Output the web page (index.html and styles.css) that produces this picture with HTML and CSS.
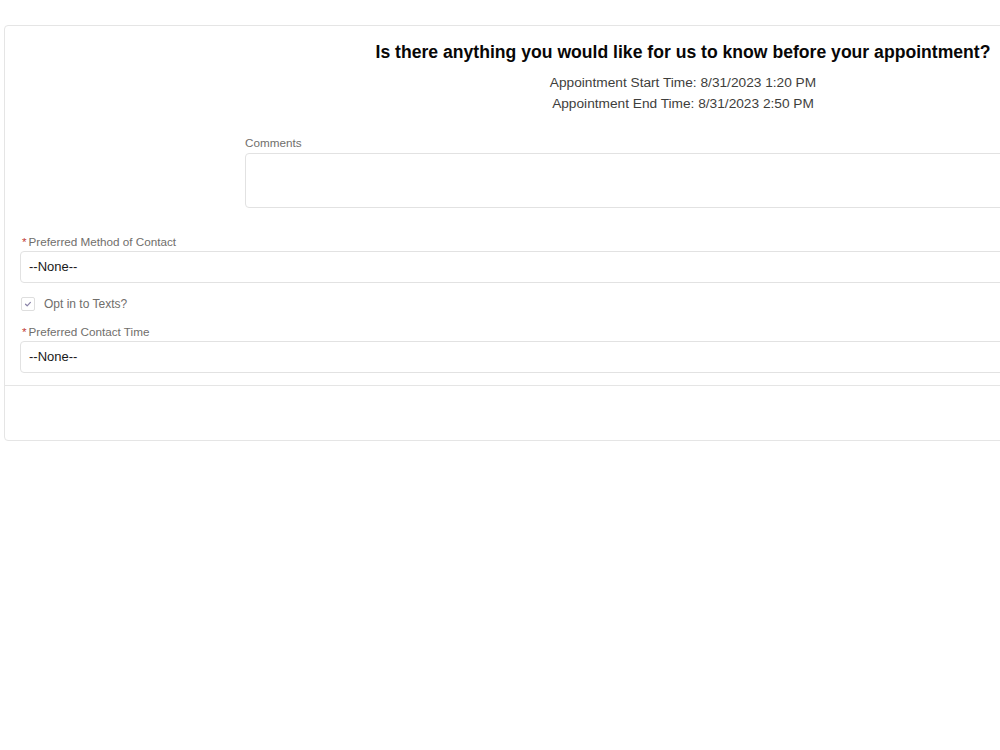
FILE: index.html
```html
<!DOCTYPE html>
<html lang="en">

<head>
    <meta charset="UTF-8">
    <meta name="viewport" content="width=device-width, initial-scale=1.0">
    <title>Appointment Details</title>
    <link rel="stylesheet" href="styles.css">
</head>

<body>
    <div class="page">
        <div class="card">
            <div class="card-body">
                <h2 class="title">Is there anything you would like for us to know before your appointment?</h2>
                <div class="times">
                    <p>Appointment Start Time: 8/31/2023 1:20 PM</p>
                    <p>Appointment End Time: 8/31/2023 2:50 PM</p>
                </div>

                <div class="comments">
                    <label for="comments" class="field-label">Comments</label>
                    <textarea id="comments" name="comments"></textarea>
                </div>

                <div class="field">
                    <label for="method" class="field-label"><abbr class="required">*</abbr>Preferred Method of Contact</label>
                    <div class="select" id="method">--None--</div>
                </div>

                <div class="check-row">
                    <span class="checkbox">
                        <svg width="10" height="10" viewBox="0 0 10 10">
                            <path d="M2.5 5.2 L4.2 6.8 L7.4 3.4" fill="none" stroke="#8a83a8" stroke-width="1.2" stroke-linecap="round" stroke-linejoin="round"/>
                        </svg>
                    </span>
                    <span class="check-label">Opt in to Texts?</span>
                </div>

                <div class="field">
                    <label for="time" class="field-label"><abbr class="required">*</abbr>Preferred Contact Time</label>
                    <div class="select" id="time">--None--</div>
                </div>
            </div>
            <div class="card-footer"></div>
        </div>
    </div>
</body>

</html>
```

FILE: styles.css
```css
body {
    font-family: Arial, "Liberation Sans", sans-serif;
    background-color: #fff;
    margin: 0;
    padding: 0;
}

.page {
    width: 1000px;
    height: 750px;
    overflow: hidden;
    padding-top: 25px;
    box-sizing: border-box;
}

.card {
    width: 1356px;
    margin-left: 4px;
    border: 1px solid #e5e5e5;
    border-radius: 4px;
    background-color: #fff;
}

.card-body {
    padding: 15px 15px 12px 15px;
}

.title {
    margin: 0;
    font-size: 17.6px;
    line-height: 22px;
    font-weight: bold;
    color: #080707;
    text-align: center;
}

.times {
    margin-top: 9px;
    text-align: center;
    color: #3e3e3c;
    font-size: 13.7px;
    line-height: 21px;
}

.times p {
    margin: 0;
}

.comments {
    margin-top: 21px;
    padding-left: 225px;
}

.field-label {
    display: block;
    font-size: 11.7px;
    line-height: 15px;
    color: #706e6b;
    margin-bottom: 2px;
}

.comments .field-label {
    margin-bottom: 3px;
}

textarea {
    display: block;
    width: 100%;
    height: 55px;
    box-sizing: border-box;
    border: 1px solid #e2e2e2;
    border-radius: 4px;
    resize: none;
    font-family: inherit;
}

.field {
    margin-top: 26px;
}

.required {
    color: #c23934;
    text-decoration: none;
    margin: 0 2px 0 2px;
}

.select {
    height: 32px;
    box-sizing: border-box;
    border: 1px solid #e2e2e2;
    border-radius: 4px;
    padding: 0 8px;
    font-size: 13px;
    line-height: 30px;
    color: #181818;
}

.check-row {
    display: flex;
    align-items: center;
    margin-top: 14px;
    margin-left: 1px;
    height: 14px;
}

.checkbox {
    display: flex;
    align-items: center;
    justify-content: center;
    width: 14px;
    height: 14px;
    box-sizing: border-box;
    border: 1px solid #dedede;
    border-radius: 2px;
}

.check-label {
    margin-left: 9px;
    font-size: 12px;
    color: #706e6b;
}

.check-row + .field {
    margin-top: 13px;
}

.card-footer {
    height: 54px;
    border-top: 1px solid #e5e5e5;
}
```
